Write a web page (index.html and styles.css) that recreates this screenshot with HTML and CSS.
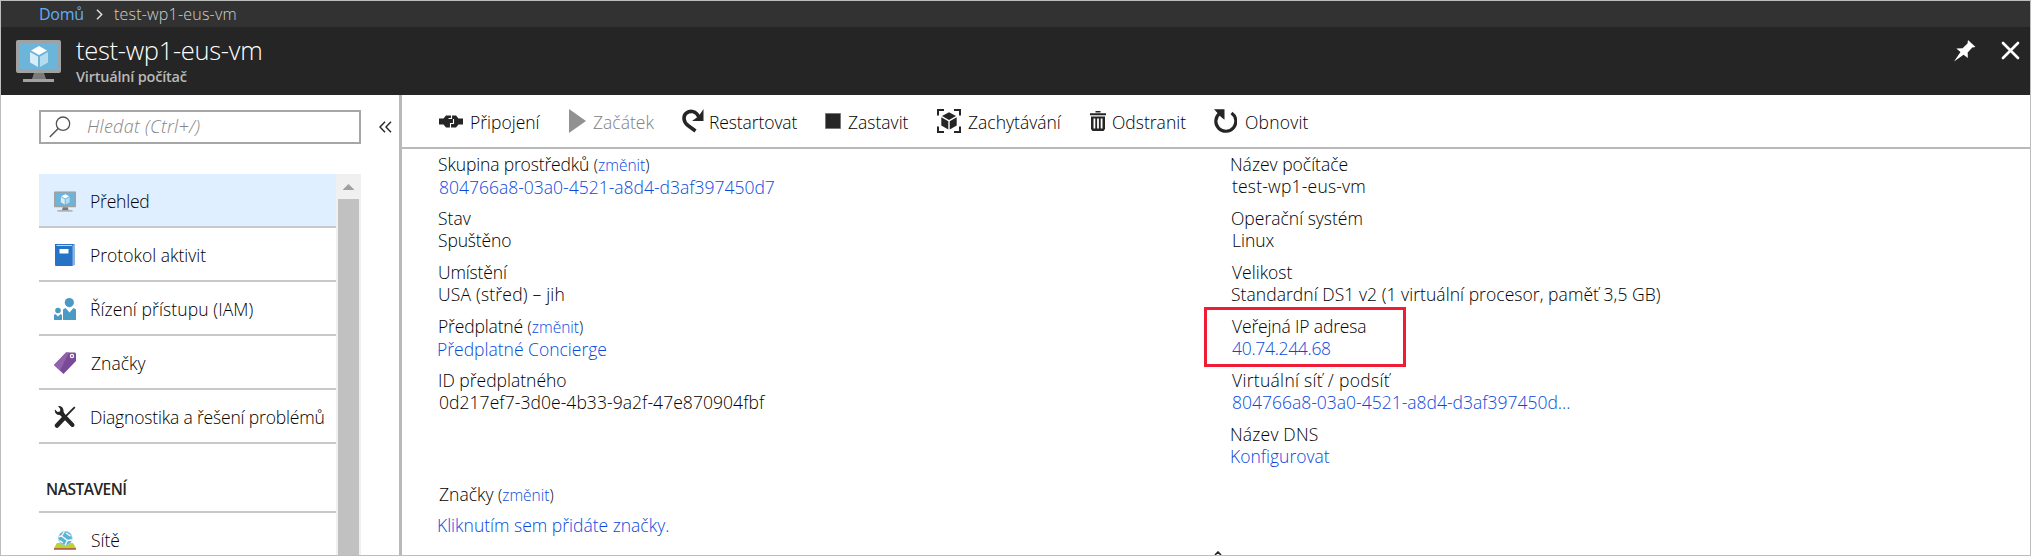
FILE: index.html
```html
<!DOCTYPE html>
<html lang="cs">
<head>
<meta charset="utf-8">
<title>test-wp1-eus-vm</title>
<link rel="stylesheet" href="styles.css">
</head>
<body>
<svg width="0" height="0" class="defs">
  <symbol id="vm" viewBox="0 0 45 42">
    <path d="M2 0h41a2 2 0 0 1 2 2v29a2 2 0 0 1-2 2H2a2 2 0 0 1-2-2V2a2 2 0 0 1 2-2z" fill="#a0a1a2"/>
    <path d="M3 3h39v26H3z" fill="#6bb4da"/>
    <path d="M18 33h10l2 6H16z" fill="#7a7a7a"/>
    <path d="M7 39h31v3H7z" fill="#a0a1a2"/>
    <path d="M23 6l8 4.500-8 4.500-8-4.500z" fill="#fff"/>
    <path d="M14 12l8 4.500V27l-8-4.500z" fill="#d9edf7"/>
    <path d="M32 12l-8 4.500V27l8-4.500z" fill="#b5dbee"/>
  </symbol>
</svg>
<div class="portal">
  <nav class="breadcrumb">
    <a class="crumb-home">Domů</a>
    <svg class="crumb-sep" width="7" height="11" viewBox="0 0 7 11"><path d="M1 .8l4.700 4.700L1 10.200" fill="none" stroke="#ddd" stroke-width="1.500"/></svg>
    <span class="crumb-current">test-wp1-eus-vm</span>
  </nav>
  <header class="titlebar">
    <svg class="title-icon" width="45" height="42"><use href="#vm"/></svg>
    <div class="title-text">
      <h1>test-wp1-eus-vm</h1>
      <p>Virtuální počítač</p>
    </div>
    <svg class="pin" width="22" height="22" viewBox="0 0 22 22"><path d="M14 0l7.500 7-3.200.6-4.600 4.800.1 5.600-4.200-3.200L0 21.500l6.500-9.400L2.300 8.600l6.300-.3 4.900-4.700z" fill="#fff"/></svg>
    <svg class="close" width="19" height="19" viewBox="0 0 19 19"><path d="M2 2l15 15M17 2L2 17" stroke="#fff" stroke-width="2.700" stroke-linecap="round"/></svg>
  </header>
  <div class="body">
    <aside class="sidebar">
      <div class="search-row">
        <div class="search">
          <svg width="22" height="22" viewBox="0 0 22 22"><circle cx="14" cy="7.700" r="6.700" fill="none" stroke="#555" stroke-width="1.300"/><path d="M9.300 12.500L.8 21" stroke="#555" stroke-width="1.500"/></svg>
          <span>Hledat (Ctrl+/)</span>
        </div>
        <svg class="collapse" width="13" height="12" viewBox="0 0 13 12"><path d="M6 .7L1 6l5 5.300M12 .7L7 6l5 5.300" fill="none" stroke="#252525" stroke-width="1.400"/></svg>
      </div>
      <div class="menu-wrap">
        <ul class="menu">
          <li class="item active"><svg width="22" height="21" viewBox="0 0 45 42"><use href="#vm"/></svg><span class="t-overview">Přehled</span></li>
          <li class="item"><svg width="22" height="22" viewBox="0 0 22 22"><path d="M3 0h18v21l-3 1z" fill="#93b3df"/><path d="M1 0h19l-1.500 2V22H2a1 1 0 0 1-1-1z" fill="#2672c4"/><path d="M2.500 1.200h16l-.8.900H2.500z" fill="#fff"/><path d="M5.500 5h9v4.500h-9z" fill="#fff"/></svg><span>Protokol aktivit</span></li>
          <li class="item"><svg width="22" height="22" viewBox="0 0 22 22"><g fill="#4b9ac4"><circle cx="15.300" cy="4.600" r="4.600"/><path d="M9 11.500l2.500-1.500 4 4.500 4-4.500 2.500 1.500V22H9z"/><circle cx="4" cy="12.500" r="2.800"/><path d="M0 17l1.500-1L4 18.500 6.500 16 8 17v5H0z"/></g></svg><span class="t-iam">Řízení přístupu (IAM)</span></li>
          <li class="item"><svg width="22" height="22" viewBox="0 0 22 22"><path d="M12 .5h9l1 1V9L9.500 22 0 13z" fill="#7a4a98"/><path d="M12 .5L0 13l6 5.600L15 .5z" fill="#9163ad"/><circle cx="18" cy="4" r="1.600" fill="#7a4a98" stroke="#fff" stroke-width="1.200"/></svg><span class="t-tags">Značky</span></li>
          <li class="item"><svg width="22" height="22" viewBox="0 0 22 22"><path d="M20.800 1.200L10 12" stroke="#252525" stroke-width="1.800"/><path d="M10.500 11.500l-7.500 8" stroke="#252525" stroke-width="4.500" stroke-linecap="round"/><path d="M8 8l10.500 11" stroke="#252525" stroke-width="4" stroke-linecap="round"/><path d="M4 0c3-.5 6 2 5.500 5.500L10.500 8 8 10.500 6 9C3 9.500 0 7 1 3.500L3.500 6 6 5.500 6.300 3z" fill="#252525"/></svg><span class="t-diag">Diagnostika a řešení problémů</span></li>
          <li class="section">NASTAVENÍ</li>
          <li class="item"><svg width="22" height="19" viewBox="0 0 22 19"><path d="M3 12h16l3 5H0z" fill="#b8d432"/><path d="M0 17h22v1.800H0z" fill="#b5644a"/><circle cx="11.300" cy="7.200" r="6.900" fill="#59b4d9" stroke="#a5d4e8" stroke-width=".6"/><path d="M10.500.5L7.500 5 5 5.500M7.500 5l6 4.500 4.500-.5M13.500 9.500L11 14M12 2l4.500 3M5.500 9.500L9 12" fill="none" stroke="#fff" stroke-width="1.300"/></svg><span class="t-net">Sítě</span></li>
        </ul>
        <div class="scrollbar"><div class="arrow"></div><div class="thumb"></div></div>
      </div>
    </aside>
    <main class="main">
      <div class="toolbar">
        <div class="cmd connect"><svg width="24" height="13" viewBox="0 0 24 13"><path d="M0 3.500h4.500L7 .5h10L19.500 3.500H24v6h-4.500L17 12.500H7L4.500 9.500H0z" fill="#252525"/><path d="M12.500 0v3.500H9.500M14.500 4v4.500h-3V13" fill="none" stroke="#fff" stroke-width="1.100"/></svg><span>Připojení</span></div>
        <div class="cmd start"><svg width="17" height="24" viewBox="0 0 17 24"><path d="M0 0l17 12L0 24z" fill="#919191"/></svg><span>Začátek</span></div>
        <div class="cmd restart"><svg width="22" height="24" viewBox="0 0 22 24"><path d="M13.500 22L6 16.500C1 13 1 6.500 4.500 4 8.500 1 14 2 17 8" fill="none" stroke="#252525" stroke-width="3.600"/><path d="M21.500 0v12H10l4.500-3.300 3-2.700z" fill="#252525"/></svg><span>Restartovat</span></div>
        <div class="cmd stop"><svg width="16" height="16"><path d="M.5.5h15v15H.5z" fill="#252525" stroke="#777"/></svg><span>Zastavit</span></div>
        <div class="cmd capture"><svg width="24" height="24" viewBox="0 0 24 24"><path d="M1 6.500V1h6M17 1h6v5.500M23 17.500V23h-6M7 23H1v-5.500" fill="none" stroke="#252525" stroke-width="2"/><path d="M12 3.300l7 3.800-7 3.900-7-3.900zM4.300 8.300l7 4V20.500l-7-4zM19.700 8.300l-7 4V20.500l7-4z" fill="#252525"/></svg><span>Zachytávání</span></div>
        <div class="cmd delete"><svg width="16" height="20" viewBox="0 0 16 20"><path d="M5.500 0h5v1.500h-5zM0 2.200h16v2H0zM1 5.500h14V18l-1.500 2h-11L1 18zM3.500 7.500v10h1.800v-10zM7.100 7.500v10h1.800v-10zM10.700 7.500v10h1.800v-10z" fill="#252525" fill-rule="evenodd"/></svg><span>Odstranit</span></div>
        <div class="cmd refresh"><svg width="23" height="24" viewBox="0 0 23 24"><path d="M5.500 4.500A10 10 0 1 0 17.500 4" fill="none" stroke="#252525" stroke-width="3.200"/><path d="M0 .3h10.500v10.500L7 8 3.500 4z" fill="#252525"/></svg><span>Obnovit</span></div>
      </div>
      <div class="essentials">
        <dl class="col left">
          <div><dt><span class="tight">Skupina prostředků</span> <small>(<a>změnit</a>)</small></dt><dd class="in"><a class="id">804766a8-03a0-4521-a8d4-d3af397450d7</a></dd></div>
          <div><dt>Stav</dt><dd class="tight">Spuštěno</dd></div>
          <div><dt class="tight">Umístění</dt><dd class="loose">USA (střed) – jih</dd></div>
          <div><dt><span class="tight">Předplatné</span> <small>(<a>změnit</a>)</small></dt><dd class="out"><a>Předplatné Concierge</a></dd></div>
          <div><dt>ID předplatného</dt><dd class="in id">0d217ef7-3d0e-4b33-9a2f-47e870904fbf</dd></div>
        </dl>
        <dl class="col right">
          <div><dt class="out">Název počítače</dt><dd class="in loose">test-wp1-eus-vm</dd></div>
          <div><dt>Operační systém</dt><dd class="in">Linux</dd></div>
          <div><dt class="in">Velikost</dt><dd class="size">Standardní DS1 v2 (1 virtuální procesor, paměť 3,5 GB)</dd></div>
          <div class="highlighted"><dt class="in tight">Veřejná IP adresa</dt><dd class="in tighter"><a>40.74.244.68</a></dd></div>
          <div><dt class="in looser">Virtuální síť / podsíť</dt><dd class="in"><a class="id">804766a8-03a0-4521-a8d4-d3af397450d...</a></dd></div>
          <div><dt class="out loose">Název DNS</dt><dd class="out"><a>Konfigurovat</a></dd></div>
        </dl>
      </div>
      <div class="tags">
        <p class="in">Značky <small>(<a>změnit</a>)</small></p>
        <p class="add out"><a>Kliknutím sem přidáte značky.</a></p>
      </div>
      <svg class="caret" width="8" height="4" viewBox="0 0 8 4"><path d="M1 4l3-3 3 3" fill="none" stroke="#252525" stroke-width="1.600"/></svg>
    </main>
  </div>
</div>
</body>
</html>
```
FILE: styles.css
```css
*, *::before, *::after { box-sizing: border-box; }
body { margin: 0; font-family: "Open Sans", "Noto Sans", sans-serif; font-size: 17.500px; font-weight: 300; color: #000; }
h1, p, ul, dl, dd { margin: 0; padding: 0; }
a { color: #0a48dc; }
svg { display: block; flex: none; }
.defs { position: absolute; }
.portal { width: 2031px; height: 556px; border: 1px solid #bdbdbd; background: #fff; display: flex; flex-direction: column; overflow: hidden; white-space: nowrap; }

.breadcrumb { height: 26px; flex: none; background: #323232; display: flex; align-items: center; padding-left: 38px; font-size: 16px; line-height: 28px; }
.crumb-home { color: #60adf5; width: 57px; font-weight: 400; letter-spacing: -.3px; }
.crumb-sep { margin-right: 11px; }
.crumb-current { color: #d0d0d0; letter-spacing: .2px; }

.titlebar { height: 68px; flex: none; background: #252525; display: flex; align-items: flex-start; padding: 13px 10px 0 15px; }
.title-icon { margin-right: 15px; }
.title-text { flex: 1; }
.title-text h1 { color: #fff; font-size: 25.500px; font-weight: 300; line-height: 30px; margin-top: -5px; letter-spacing: -.3px; }
.title-text p { color: #b9b9b9; font-size: 14.500px; font-weight: 600; line-height: 20px; letter-spacing: -.2px; margin-top: 2px; }
.pin { margin-right: 25px; }
.close { margin-top: 1px; }

.body { flex: 1; display: flex; min-height: 0; }
.sidebar { width: 401px; flex: none; border-right: 3px solid #b9b9b9; padding: 15px 0 0 38px; display: flex; flex-direction: column; }
.search-row { display: flex; align-items: center; height: 34px; }
.search { width: 322px; height: 34px; border: 2px solid #a6a6a6; display: flex; align-items: center; padding-left: 8px; }
.search span { margin: -3px 0 0 16px; font-style: italic; font-size: 18px; color: #858585; letter-spacing: .3px; }
.search svg { margin-bottom: 1px; }
.collapse { margin-left: 18px; }
.menu-wrap { margin-top: 30px; display: flex; width: 322px; flex: 1; min-height: 0; overflow: hidden; }
.menu { list-style: none; width: 297px; }
.item { height: 54px; border-bottom: 2px solid #c8c8c8; display: flex; align-items: center; padding: 2px 0 0 15px; }
.item span { margin-left: 14px; }
.item .t-overview { letter-spacing: -.2px; }
.item .t-iam { letter-spacing: .1px; }
.item .t-diag { letter-spacing: -.17px; }
.item .t-tags, .item .t-net { margin-left: 15px; }
.item.active { background: #e0efff; }
.section { height: 69px; border-bottom: 2px solid #c8c8c8; padding: 35px 0 0 7px; font-size: 15.500px; font-weight: 600; line-height: 20px; letter-spacing: -.5px; color: #252525; }
.scrollbar { width: 25px; background: #f0f0f0; display: flex; flex-direction: column; align-items: center; }
.arrow { height: 25px; padding-top: 10px; }
.arrow::before { content: ""; display: block; width: 12px; height: 6px; background: #a0a0a0; clip-path: polygon(50% 0, 100% 100%, 0 100%); }
.thumb { width: 21px; flex: 1; background: #c1c1c1; }

.main { flex: 1; position: relative; min-width: 0; }
.toolbar { height: 54px; border-bottom: 2px solid #b9b9b9; display: flex; align-items: center; padding-left: 37px; }
.cmd { display: flex; align-items: center; height: 52px; }
.cmd span { margin-left: 7px; padding-top: 1px; }
.connect { width: 130px; }
.start { width: 113px; color: #808080; }
.restart { width: 143px; }
.restart span { margin-left: 5px; letter-spacing: -.1px; }
.stop { width: 112px; }
.capture { width: 153px; }
.delete { width: 124px; }
.delete span { margin-left: 6px; }
.refresh span { margin-left: 8px; letter-spacing: .2px; }
.essentials { display: flex; padding: 4px 0 0 36px; }
.col { line-height: 22px; }
.col > div { height: 54px; }
.left { width: 793px; }
.in { padding-left: 1px; }
.out { margin-left: -1px; }
.tight { letter-spacing: -.15px; }
.tighter { letter-spacing: -.3px; }
.loose { letter-spacing: .2px; }
.looser { letter-spacing: .3px; }
.size { letter-spacing: .05px; }
.left dd.id { letter-spacing: .06px; }
small { font-size: 15.500px; }
.highlighted { position: relative; }
.highlighted::after { content: ""; position: absolute; left: -27px; top: -8px; width: 202px; height: 60px; border: 3px solid #f01c35; }
.tags { line-height: 22px; padding-left: 36px; margin-top: 6px; }
.add { margin-top: 8px; }
.caret { position: absolute; left: 812px; bottom: 0; }
```
